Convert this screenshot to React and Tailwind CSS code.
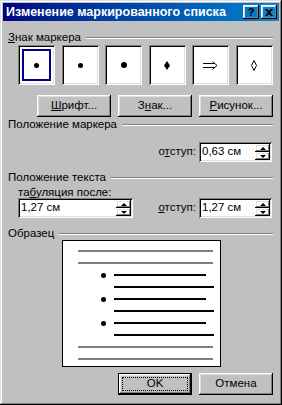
const raised = "shadow-[inset_-1px_-1px_#000,inset_1px_1px_#fff,inset_-2px_-2px_#808080,inset_2px_2px_#dfdfdf]";
const sunken = "shadow-[inset_1px_1px_#808080,inset_-1px_-1px_#fff,inset_2px_2px_#000,inset_-2px_-2px_#dfdfdf]";

function GroupHeader({ children, className = "" }) {
  return (
    <div className={`flex items-center h-[13px] ${className}`}>
      <span className="whitespace-nowrap">{children}</span>
      <div className="flex-1 ml-[5px] border-t border-t-[#808080] border-b border-b-white" />
    </div>
  );
}

function Button({ children, isDefault = false }) {
  if (isDefault) {
    return (
      <div className="w-[74px] h-[22px] border border-black">
        <div className={`w-full h-full ${raised} flex items-center justify-center p-[3px]`}>
          <div className="w-full h-full border border-dotted border-black flex items-center justify-center">
            {children}
          </div>
        </div>
      </div>
    );
  }
  return (
    <div className={`w-[74px] h-[22px] ${raised} flex items-center justify-center`}>
      {children}
    </div>
  );
}

function Spin({ value, width }) {
  return (
    <div className={`${width} h-[20px] bg-white ${sunken} flex items-center pl-[3px] pr-[2px]`}>
      <span className="flex-1 leading-none">{value}</span>
      <div className="flex flex-col w-[15px] h-[16px]">
        <div className={`h-[8px] ${raised} flex items-center justify-center`}>
          <div className="w-0 h-0 border-x-[3px] border-x-transparent border-b-[3px] border-b-black" />
        </div>
        <div className={`h-[8px] ${raised} flex items-center justify-center`}>
          <div className="w-0 h-0 border-x-[3px] border-x-transparent border-t-[3px] border-t-black" />
        </div>
      </div>
    </div>
  );
}

function BulletBox({ selected, children }) {
  return (
    <div className={`w-[37px] h-[40px] bg-white ${sunken} flex items-center justify-center p-[4px]`}>
      <div className={`w-full h-full flex items-center justify-center ${selected ? "border-2 border-[#000080]" : ""}`}>
        {children}
      </div>
    </div>
  );
}

function PreviewLine({ grey, short, bullet }) {
  return (
    <div className="h-[12px] flex items-center">
      {grey ? (
        <div className="ml-[15px] w-[135px] h-[2px] bg-[#808080]" />
      ) : (
        <>
          <div className="w-[51px] flex justify-end pr-[8px]">
            {bullet && <div className="w-[5px] h-[5px] rounded-full bg-black" />}
          </div>
          <div className={`${short ? "w-[92px]" : "w-[100px]"} h-[2px] bg-black`} />
        </>
      )}
    </div>
  );
}

export default function App() {
  return (
    <div className="w-[282px] h-[405px] bg-[#c0c0c0] p-[3px] flex flex-col text-[11.5px] text-black font-['Liberation_Sans',Arial,sans-serif] shadow-[inset_-1px_-1px_#000,inset_1px_1px_#dfdfdf,inset_-2px_-2px_#808080,inset_2px_2px_#fff] overflow-hidden">
      <div className="h-[18px] flex items-center bg-linear-to-r from-[#000080] to-[#1084d0] pl-[3px] pr-[2px]">
        <span className="flex-1 min-w-0 overflow-hidden text-white font-bold text-[12.5px] whitespace-nowrap">Изменение маркированного списка</span>
        <div className={`w-[16px] h-[14px] ${raised} flex items-center justify-center font-bold text-[11px] leading-none`}>?</div>
        <div className={`w-[16px] h-[14px] ml-[2px] ${raised} flex items-center justify-center`}>
          <svg width="8" height="7" viewBox="0 0 8 7">
            <path d="M0 0h2l2 2 2-2h2L5 3.5 8 7H6L4 5 2 7H0l3-3.5z" fill="#000" />
          </svg>
        </div>
      </div>

      <div className="flex flex-col pl-[5px] pr-[6px]">
        <GroupHeader className="mt-[10px]">
          <span className="underline">З</span>нак маркера
        </GroupHeader>

        <div className="mt-[1px] ml-[10px] flex justify-between">
          <BulletBox selected>
            <div className="w-[5px] h-[5px] rounded-full bg-black" />
          </BulletBox>
          <BulletBox>
            <div className="w-[5px] h-[5px] rounded-full bg-black" />
          </BulletBox>
          <BulletBox>
            <div className="w-[6px] h-[6px] rounded-full bg-black" />
          </BulletBox>
          <BulletBox>
            <svg width="6" height="9" viewBox="0 0 6 9">
              <path d="M3 0L6 4.5 3 9 0 4.5z" fill="#000" />
            </svg>
          </BulletBox>
          <BulletBox>
            <svg width="15" height="9" viewBox="0 0 15 9" fill="none" stroke="#000" strokeWidth="1">
              <path d="M0 2.5h12M0 6.5h12M9.5 0.5L14 4.5 9.5 8.5" />
            </svg>
          </BulletBox>
          <BulletBox>
            <svg width="6" height="11" viewBox="0 0 6 11">
              <path d="M3 0.5L5.5 5.5 3 10.5 0.5 5.5z" fill="none" stroke="#000" strokeWidth="1" />
            </svg>
          </BulletBox>
        </div>

        <div className="mt-[10px] flex justify-end gap-[7px]">
          <Button><span><span className="underline">Ш</span>рифт...</span></Button>
          <Button><span>З<span className="underline">н</span>ак...</span></Button>
          <Button><span><span className="underline">Р</span>исунок...</span></Button>
        </div>

        <GroupHeader className="mt-[1px]">Положение маркера</GroupHeader>

        <div className="mt-[11px] flex items-center justify-end gap-[3px] pr-[1px]">
          <span>о<span className="underline">т</span>ступ:</span>
          <Spin value="0,63 см" width="w-[73px]" />
        </div>

        <GroupHeader className="mt-[9px]">Положение текста</GroupHeader>

        <div className="mt-[2px] ml-[10px] h-[12px] leading-[12px]">
          та<span className="underline">б</span>уляция после:
        </div>

        <div className="flex items-center">
          <div className="ml-[10px]">
            <Spin value="1,27 см" width="w-[115px]" />
          </div>
          <div className="flex-1 flex items-center justify-end gap-[3px] pr-[1px]">
            <span><span className="underline">о</span>тступ:</span>
            <Spin value="1,27 см" width="w-[73px]" />
          </div>
        </div>

        <GroupHeader className="mt-[9px]">Образец</GroupHeader>

        <div className="flex justify-center pl-[2px]">
          <div className="w-[159px] h-[127px] bg-white border border-black pt-[4px]">
            <PreviewLine grey />
            <PreviewLine grey />
            <PreviewLine bullet short />
            <PreviewLine />
            <PreviewLine bullet short />
            <PreviewLine />
            <PreviewLine bullet short />
            <PreviewLine />
            <PreviewLine grey />
            <PreviewLine grey />
          </div>
        </div>

        <div className="mt-[6px] flex justify-end gap-[7px]">
          <Button isDefault>OK</Button>
          <Button>Отмена</Button>
        </div>
      </div>
    </div>
  );
}
